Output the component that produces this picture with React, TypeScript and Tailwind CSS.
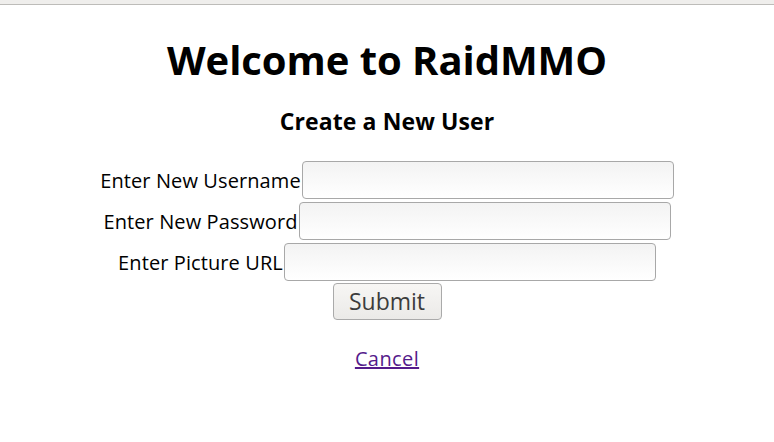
export default function App() {
  const fields = [
    { label: "Enter New Username", type: "text" },
    { label: "Enter New Password", type: "password" },
    { label: "Enter Picture URL", type: "text" },
  ];

  return (
    <div className="min-h-[442px] bg-white text-black font-['Open_Sans',sans-serif]">
      <div className="h-[5px] bg-[#efeeec] border-b border-[#bdbcb9]" />
      <div className="flex flex-col items-center">
        <h1 className="mt-[27px] text-[40px] leading-[56px] font-bold tracking-[-0.05px]">Welcome to RaidMMO</h1>
        <h3 className="mt-[18px] text-[23px] leading-[30px] font-bold tracking-[0.1px]">Create a New User</h3>
        <form className="mt-[25px] flex flex-col items-center gap-[3px]">
          {fields.map((f) => (
            <div key={f.label} className="flex items-end">
              <label className="text-[20px] leading-none pb-[8px] tracking-[0.1px]">{f.label}</label>
              <input
                type={f.type}
                className="ml-[1px] w-[372px] h-[38px] rounded-[4px] border border-[#a8a8a8] bg-gradient-to-b from-[#f3f3f3] to-white px-2 outline-none"
              />
            </div>
          ))}
          <button
            type="button"
            className="mt-[-1px] w-[109px] h-[37px] rounded-[4px] border border-[#aaa] bg-gradient-to-b from-[#f7f6f4] to-[#ebeae8] text-[23px] text-[#3c3c3c] leading-none"
          >
            Submit
          </button>
        </form>
        <a href="#" className="mt-[24px] text-[20px] tracking-[0.4px] text-[#551a8b] underline">
          Cancel
        </a>
      </div>
    </div>
  );
}
